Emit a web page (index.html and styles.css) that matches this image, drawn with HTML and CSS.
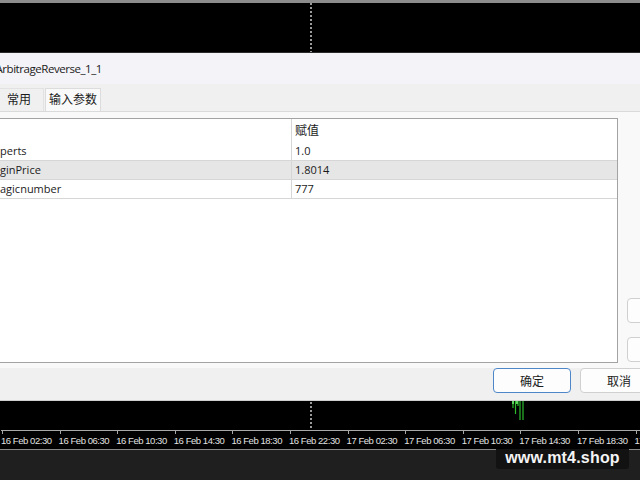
FILE: index.html
```html
<!DOCTYPE html>
<html lang="zh">
<head>
  <meta charset="utf-8">
  <title>ArbitrageReverse_1_1</title>
  <link rel="stylesheet" href="styles.css">
</head>
<body>

  <div class="chart-top">
    <svg width="640" height="49" viewBox="0 0 640 49">
      <line x1="311" y1="0" x2="311" y2="49" stroke="#9a9a9a" stroke-width="2" stroke-dasharray="2 2"/>
    </svg>
  </div>

  <div class="dialog">
    <div class="titlebar"><span class="title">ArbitrageReverse_1_1</span></div>

    <div class="tabs">
      <div class="tab">常用</div>
      <div class="tab active">输入参数</div>
    </div>

    <div class="page">
      <div class="params">
        <div class="row head">
          <div class="cell name"></div>
          <div class="cell value">赋值</div>
        </div>
        <div class="row">
          <div class="cell name">perts</div>
          <div class="cell value">1.0</div>
        </div>
        <div class="row selected">
          <div class="cell name">ginPrice</div>
          <div class="cell value">1.8014</div>
        </div>
        <div class="row">
          <div class="cell name">agicnumber</div>
          <div class="cell value">777</div>
        </div>
      </div>
      <!-- load / save buttons, their labels lie outside the window -->
      <div class="side">
        <button class="btn"></button>
        <button class="btn"></button>
      </div>
    </div>

    <div class="actions">
      <button class="btn primary">确定</button>
      <button class="btn">取消</button>
    </div>
  </div>

  <div class="chart-bottom">
    <svg width="640" height="29" viewBox="0 0 640 29">
      <line x1="311" y1="1" x2="311" y2="27" stroke="#9a9a9a" stroke-width="2" stroke-dasharray="2 2"/>
      <g stroke="#2dbb2d" stroke-width="1.2">
        <line x1="513" y1="0" x2="513" y2="7"/>
        <line x1="515.5" y1="0" x2="515.5" y2="13"/>
        <line x1="518" y1="0" x2="518" y2="5"/>
        <line x1="520" y1="0" x2="520" y2="19"/>
        <line x1="523" y1="0" x2="523" y2="19"/>
      </g>
      <g stroke="#5fd35f" stroke-width="2">
        <line x1="513" y1="0" x2="513" y2="3"/>
        <line x1="517" y1="0" x2="517" y2="3"/>
      </g>
    </svg>
    <div class="axis">
      <div class="tick">16 Feb 02:30</div>
      <div class="tick">16 Feb 06:30</div>
      <div class="tick">16 Feb 10:30</div>
      <div class="tick">16 Feb 14:30</div>
      <div class="tick">16 Feb 18:30</div>
      <div class="tick">16 Feb 22:30</div>
      <div class="tick">17 Feb 02:30</div>
      <div class="tick">17 Feb 06:30</div>
      <div class="tick">17 Feb 10:30</div>
      <div class="tick">17 Feb 14:30</div>
      <div class="tick">17 Feb 18:30</div>
      <div class="tick">17 Feb 22:30</div>
    </div>
  </div>

  <div class="statusbar">
    <div class="watermark">www.mt4.shop</div>
  </div>

</body>
</html>
```

FILE: styles.css
```css
body {
  margin: 0;
  width: 640px;
  height: 480px;
  overflow: hidden;
  background-color: #000;
  font-family: "Open Sans", "Noto Sans CJK SC", sans-serif;
  font-size: 11px;
  color: #1b1b1b;
}
svg { display: block; }

/* chart above the dialog */
.chart-top {
  height: 49px;
  border-top: 3px solid #8c8c8c;
  border-bottom: 1px solid #2a2a2a;
  background-color: #000;
}

.dialog {
  width: 720px;
  margin-left: -10px;
  background-color: #f0f0f0;
  border-bottom: 1px solid #cfcfcf;
}
.titlebar {
  height: 31px;
  display: flex;
  align-items: center;
  padding-left: 5.5px;
  background-color: #f4f3f7;
  font-size: 11.5px;
  letter-spacing: -0.45px;
}

.tabs {
  height: 27px;
  display: flex;
  align-items: flex-end;
  padding-left: 4px;
  gap: 1px;
  border-bottom: 1px solid #dadada;
}
.tab {
  height: 22px;
  line-height: 22px;
  padding: 0 6px;
  border: 1px solid #e2e2e2;
  border-bottom: none;
  background-color: #f0f0f0;
  text-align: center;
  font-size: 12px;
  white-space: nowrap;
}
.tab:first-child { width: 36px; }
.tab.active { padding: 0 3px; background-color: #f9f9f9; border-color: #dcdcdc; }

.page {
  display: flex;
  gap: 9px;
  padding: 6px 0 5px 8px;
  background-color: #f9f9f9;
}
.params {
  width: 618px;
  height: 243px;
  border: 1px solid #a3a3a3;
  background-color: #fff;
}
.row {
  display: grid;
  grid-template-columns: 292px 1fr;
  height: 18px;
  line-height: 18px;
  border-bottom: 1px solid #d6d6d6;
}
.row.head { height: 23px; line-height: 23px; border-bottom: none; font-size: 12px; }
.row.selected { background-color: #e6e6e6; }
.cell { white-space: nowrap; overflow: hidden; }
.cell.name { padding-left: 1px; }
.cell.value { padding-left: 3px; border-left: 1px solid #d6d6d6; }

.side {
  display: flex;
  flex-direction: column;
  justify-content: flex-end;
  gap: 14px;
  padding-bottom: 1px;
}

.btn {
  width: 78px;
  height: 25px;
  padding: 0;
  border: 1px solid #d0d0d0;
  border-radius: 4px;
  background-color: #fdfdfd;
  font-family: "Open Sans", "Noto Sans CJK SC", sans-serif;
  font-size: 12px;
  color: #1b1b1b;
}
.btn.primary { border: 1.5px solid #4d86c9; }

.actions {
  height: 32px;
  display: flex;
  justify-content: flex-end;
  align-items: flex-start;
  gap: 9px;
  padding-right: 52px;
}

/* chart below the dialog */
.chart-bottom {
  height: 48px;
  background-color: #000;
}
.axis {
  display: flex;
  margin-left: 1px;
  border-top: 1px solid #a8a8a8;
  height: 18px;
  overflow: hidden;
}
.tick {
  flex: 0 0 57.6px;
  font-family: "Liberation Sans", Arial, sans-serif;
  font-size: 9.5px;
  letter-spacing: -0.45px;
  line-height: 11px;
  color: #e2e2e2;
  white-space: nowrap;
}
.tick::before {
  content: "";
  display: block;
  width: 1px;
  height: 3px;
  margin-left: 1px;
  margin-bottom: 1px;
  background-color: #a8a8a8;
}

.statusbar {
  height: 30px;
  border-top: 1px solid #8a8a8a;
  background-color: #1f1f1f;
  display: flex;
  justify-content: flex-end;
  padding-right: 11px;
}
.watermark {
  width: 133px;
  height: 20px;
  margin-top: -1px;
  background-color: #121212;
  border-radius: 0 0 3px 3px;
  text-align: center;
  line-height: 18px;
  font-family: "Liberation Sans", Arial, sans-serif;
  font-weight: bold;
  font-size: 16px;
  letter-spacing: 0.2px;
  color: #f4f4f4;
}
```
